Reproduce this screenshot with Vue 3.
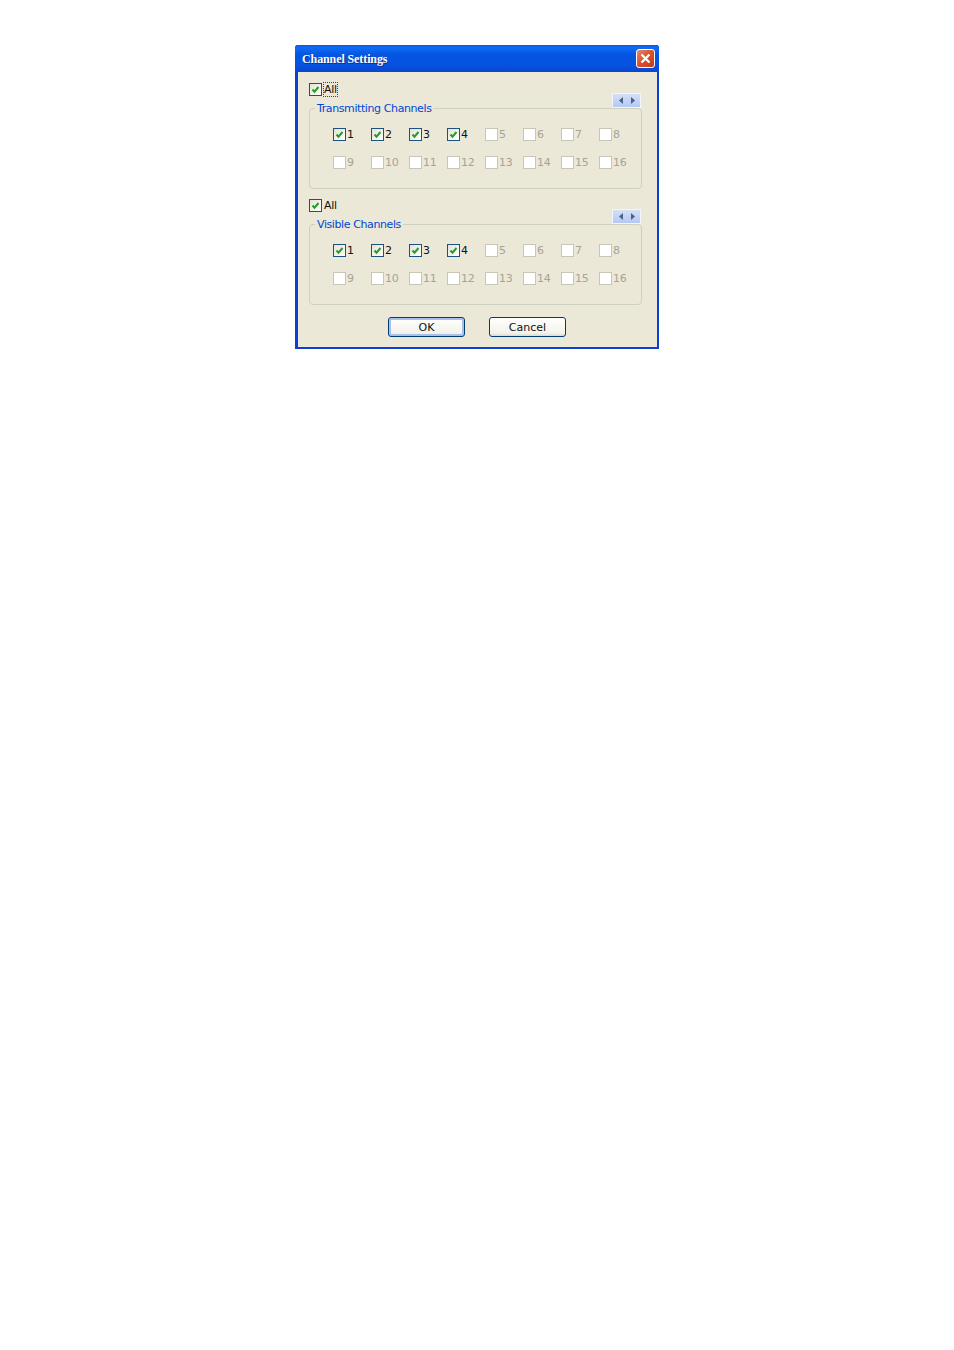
<script setup>
const groups = [
  { title: 'Transmitting Channels', focus: true },
  { title: 'Visible Channels', focus: false },
]
const channels = Array.from({ length: 16 }, (_, i) => i + 1)
</script>

<template>
  <div class="page">
    <div class="window">
      <div class="titlebar">
        <span class="title">Channel Settings</span>
        <button type="button" class="close">
          <svg width="13" height="13" viewBox="0 0 13 13">
            <path d="M2.5 2.5l8 8M10.5 2.5l-8 8" stroke="#fff" stroke-width="2.2" fill="none" />
          </svg>
        </button>
      </div>
      <div class="body">
        <section v-for="g in groups" :key="g.title" class="block">
          <div class="all">
            <span class="box on">
              <svg width="9" height="9" viewBox="0 0 9 9"><path d="M1.5 4.5l2 2.2L7.5 2" stroke="#21a121" stroke-width="2" fill="none" /></svg>
            </span>
            <span class="all-label" :class="{ focus: g.focus }">All</span>
          </div>
          <div class="scroller">
            <svg width="5" height="7" viewBox="0 0 5 7"><path d="M4 0v7L0 3.5z" fill="#4d6185" /></svg>
            <svg width="5" height="7" viewBox="0 0 5 7"><path d="M1 0v7l4-3.5z" fill="#4d6185" /></svg>
          </div>
          <fieldset class="group">
            <legend>{{ g.title }}</legend>
            <div class="grid">
              <div v-for="n in channels" :key="n" class="chan" :class="{ off: n > 4 }">
                <span class="box" :class="{ on: n <= 4 }">
                  <svg v-if="n <= 4" width="9" height="9" viewBox="0 0 9 9"><path d="M1.5 4.5l2 2.2L7.5 2" stroke="#21a121" stroke-width="2" fill="none" /></svg>
                </span>
                <span class="num">{{ n }}</span>
              </div>
            </div>
          </fieldset>
        </section>
        <div class="buttons">
          <button type="button" class="btn default">OK</button>
          <button type="button" class="btn">Cancel</button>
        </div>
      </div>
    </div>
  </div>
</template>

<style>
html, body { background: #fff; }
</style>

<style scoped>
.page { width: 954px; height: 1350px; padding: 45px 0 0 295px; box-sizing: border-box; font-family: "DejaVu Sans", sans-serif; }
.window { width: 364px; height: 304px; box-sizing: border-box; background: #0a3fd8; border-radius: 3px 3px 0 0; padding: 0 2px 2px 3px; display: flex; flex-direction: column; }
.titlebar { height: 27px; margin: 0 -2px 0 -3px; padding: 1px 4px 0 7px; box-sizing: border-box; display: flex; align-items: center; justify-content: space-between; border-radius: 3px 3px 0 0; background: linear-gradient(#0a5ae6 0, #0f6cf5 10%, #0455e2 35%, #0552e0 75%, #0a45cc 100%); flex: none; }
.title { font: bold 12px "Liberation Serif", serif; color: #fff; letter-spacing: -.1px; text-shadow: 1px 1px 0 #0a2f90; }
.close { width: 19px; height: 19px; margin-top: -2px; padding: 0; border: 1px solid #fff; border-radius: 3px; background: linear-gradient(135deg, #e88a6e, #d9502a 50%, #c23c1a); display: flex; align-items: center; justify-content: center; }
.body { flex: 1; background: #ebe8d8; padding: 11px 12px 0 11px; }
.block { position: relative; height: 116px; }
.all { height: 13px; display: flex; align-items: center; gap: 2px; }
.box { width: 11px; height: 11px; flex: none; background: #fff; border: 1px solid #c8c6b8; display: flex; align-items: center; justify-content: center; }
.box.on { border-color: #1c5180; background: linear-gradient(135deg, #e4e2d6, #fff); }
.all-label { font-size: 11px; line-height: 13px; color: #111; letter-spacing: -.3px; }
.all-label.focus { outline: 1px dotted #444; outline-offset: 0; }
.scroller { position: absolute; top: 10px; right: 4px; width: 29px; height: 15px; box-sizing: border-box; display: flex; align-items: center; justify-content: center; gap: 6px; background: linear-gradient(#d5e0f8, #b4c8f4); border: 1px solid #f2f5fc; }
.group { margin: 6px 0 0; padding: 0; width: 333px; height: 87px; box-sizing: border-box; border: 1px solid #d0d0bf; border-radius: 4px; }
legend { margin-left: 5px; padding: 0 2px; font-size: 11px; line-height: 13px; color: #0046d5; letter-spacing: -.4px; }
.grid { display: grid; grid-template-columns: repeat(8, 38px); grid-auto-rows: 28px; padding: 12px 0 0 23px; }
.chan { display: flex; align-items: center; gap: 1px; height: 14px; font-size: 11px; color: #111; }
.chan.off { color: #a5a498; }
.num { letter-spacing: -.2px; }
.buttons { display: flex; justify-content: center; gap: 24px; margin-top: 2px; }
.btn { width: 77px; height: 20px; padding: 1px 0 0; border: 1px solid #003c74; border-radius: 3px; background: linear-gradient(#fff, #f3f2ea 85%, #dcd8c8); font: 11px "DejaVu Sans", sans-serif; color: #111; }
.btn.default { box-shadow: inset 0 0 0 2px #a9c0e8; }
</style>
